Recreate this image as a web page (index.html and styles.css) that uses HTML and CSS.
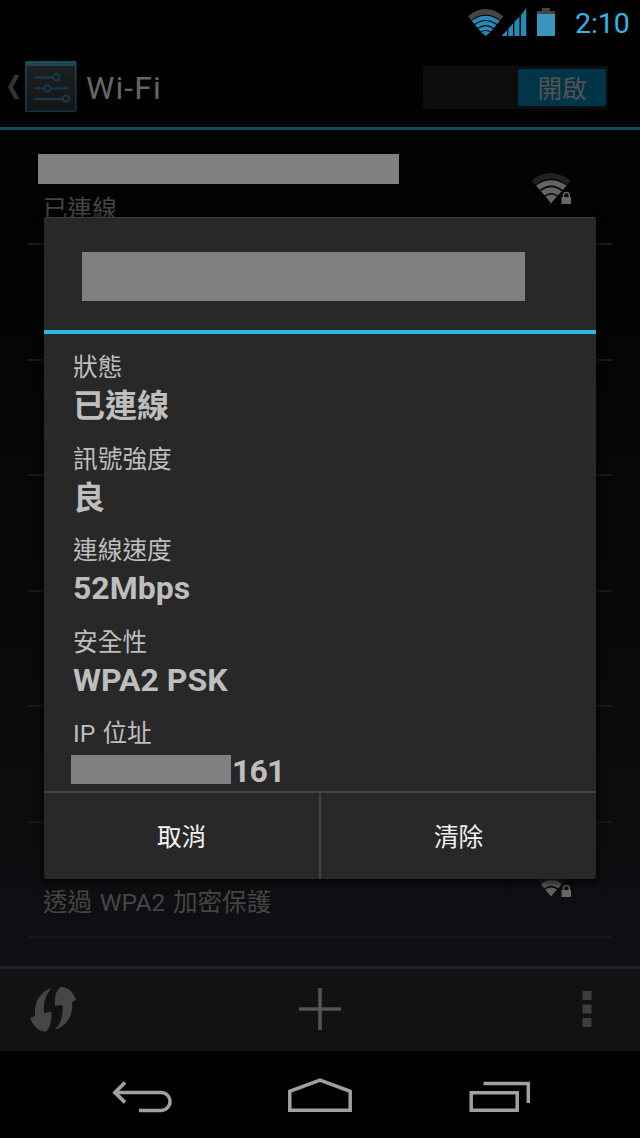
FILE: index.html
```html
<!DOCTYPE html>
<html lang="zh-Hant">
<head>
<meta charset="utf-8">
<title>Wi-Fi</title>
<link rel="stylesheet" href="styles.css">
</head>
<body>
<div class="screen">
  <div class="status">
    <svg class="status-icons" width="90" height="30" viewBox="467 8 90 30">
      <path fill="#444" d="M468 16.2Q485.700 2 503.300 16.200L500.300 20.200Q485.700 9.500 471.200 20.200Z"/>
      <g fill="#2789b6">
        <path d="M471.700 20.800Q485.700 10.500 499.800 20.800L497.100 24.100Q485.700 16 474.400 24.100Z"/>
        <path d="M475 24.900Q485.700 17.300 496.500 24.900L494 27.900Q485.700 22.300 477.500 27.900Z"/>
        <path d="M478.200 28.700Q485.700 23.600 493.300 28.700L490.800 31.600Q485.700 28.200 480.700 31.600Z"/>
        <path d="M481.300 32.300Q485.700 29.500 490.200 32.300L485.700 36Z"/>
        <path d="M501.500 36L507 30V36ZM508.300 36V28.500L513 23.500V36ZM514.300 36V22L519.500 16.500V36ZM521 36V15L526.300 8V36Z"/>
      </g>
      <path fill="#444" d="M537 11h5V8h8v3h5v4h-18z"/>
      <path fill="#3a95bb" d="M537 14h18v22h-18z"/>
    </svg>
    <span class="clock">2:10</span>
  </div>
  <div class="header">
    <svg class="up" width="72" height="54" viewBox="6 60 72 54">
      <defs><linearGradient id="g" x2="0" y2="1"><stop stop-color="#1f1f1f"/><stop offset="1" stop-color="#151515"/></linearGradient>
      <linearGradient id="e" x2="0" y2="1"><stop stop-color="#1b4a5a"/><stop offset="1" stop-color="#10334f"/></linearGradient></defs>
      <path fill="#333" d="M14.500 75H19.500L13 87.300L19.500 99.300H14.500L8 87.300Z"/>
      <rect x="25" y="61" width="51.500" height="51" rx="1.500" fill="url(#e)"/>
      <path fill="url(#g)" d="M26.700 66H75V110.700H26.700Z"/>
      <path stroke="#101a22" stroke-width="1.600" d="M60 77.300H69M51 87.800H69"/>
      <g stroke="#133a56" stroke-width="2" fill="none"><path d="M34 77.500H53M34 88.300H44M50.500 88.300H69M34 99H62.500"/><circle cx="56.300" cy="77.300" r="3.200"/><circle cx="47.500" cy="88.300" r="3.200"/><circle cx="66" cy="98.600" r="3.200"/></g>
    </svg>
    <h1 class="title">Wi-Fi</h1>
    <div class="switch"><span class="thumb">開啟</span></div>
  </div>
  <div class="list">
    <div class="row first">
      <div class="names"><div class="redacted"></div><div class="summary">已連線</div></div>
      <svg class="signal" width="42" height="34" viewBox="531 172 42 34">
        <path fill="#202020" d="M531.500 180.500Q551 165.500 570.500 180.500L567.300 185Q551 172.500 535.200 185Z"/>
        <g fill="#636363"><path d="M536 185.500Q551 175 566.500 185.500L562.800 190Q551 181 539.800 190Z"/><path d="M540.800 191Q551 183.300 561.800 191L558 195.500Q551 190.500 544.500 195.500Z"/><path d="M545.500 196.300Q551 192.500 557 196.300L551 203.500Z"/></g>
        <rect x="560.500" y="196" width="12" height="9" fill="#020303"/><path fill="#676767" d="M561.500 197H571V204H561.500Z"/><path d="M563.500 197.500V195.500a2.900 2.900 0 0 1 5.800 0V197.500" fill="none" stroke="#676767" stroke-width="1.500"/>
      </svg>
    </div>
    <div class="row"></div><div class="row"></div><div class="row"></div><div class="row"></div><div class="row"></div>
    <div class="row last">
      <div class="summary">透過 WPA2 加密保護</div>
      <svg class="signal" width="42" height="34" viewBox="531 172 42 34">
        <path fill="#202122" d="M531.500 180.500Q551 165.500 570.500 180.500L561.800 190.500H540.500Z"/>
        <g fill="#636363"><path d="M540.800 191Q551 182.300 561.800 191L558.300 195.300Q551 190 544.200 195.300Z"/><path d="M545.200 196.500Q551 192.500 557 196.500L551 203.500Z"/></g>
        <path fill="#676767" d="M561.500 197H571V204H561.500Z"/><path d="M563.500 197.500V195.500a2.900 2.900 0 0 1 5.800 0V197.500" fill="none" stroke="#676767" stroke-width="1.500"/>
      </svg>
    </div>
  </div>
  <div class="actions">
    <svg width="48" height="48" viewBox="29 985 48 48" fill="#464646"><path d="M51.700 988C39 992 34 1003 35 1016L30.200 1018C33 1026 39 1032 46.500 1031.500C51 1026 52 1019 51.300 1011.500L44 1013C43 1003 46 994 51.700 988Z"/><path d="M60.500 986.700C68 987 74 992 76.200 1000L72 1002C73.500 1015 67 1026 55 1029.700C61 1023 63.500 1015 62.300 1005L55.200 1006C54 999 55.500 991 60.500 986.700Z"/></svg>
    <svg class="plus" width="44" height="44" viewBox="0 0 44 44" stroke="#555" stroke-width="3.600"><path d="M1 22H43M22 1V43"/></svg>
    <svg width="10" height="38" viewBox="0 0 10 38" fill="#3e3e3f"><path d="M.500 1h9v9h-9zM.500 14.500h9v9h-9zM.500 28h9v9h-9z"/></svg>
  </div>
  <div class="nav">
    <svg width="420" height="40" viewBox="112 1076 420 40" fill="none" stroke="#a0a0a0" stroke-width="3.500">
      <path d="M125 1082.500L115 1092.500L125 1102.500" stroke-width="3.800"/><path d="M115 1092.500H161a9 9 0 0 1 0 18H139"/>
      <path d="M289.800 1110.200V1091.300L320 1080.200L350.200 1091.300V1110.200Z"/>
      <path d="M471.200 1092.800H517.200V1110.200H471.200ZM483.500 1083.600H528.300V1103"/>
    </svg>
  </div>
  <div class="dialog">
    <div class="dialog-head"><div class="dialog-name"></div></div>
    <div class="details">
      <div class="item"><div class="label">狀態</div><div class="value">已連線</div></div>
      <div class="item"><div class="label">訊號強度</div><div class="value">良</div></div>
      <div class="item"><div class="label">連線速度</div><div class="value latin">52Mbps</div></div>
      <div class="item"><div class="label">安全性</div><div class="value latin">WPA2 PSK</div></div>
      <div class="item"><div class="label">IP 位址</div><div class="value latin ip"><span class="mask"></span><span class="octet">161</span></div></div>
    </div>
    <div class="buttons"><div class="button">取消</div><div class="button">清除</div></div>
  </div>
</div>
</body>
</html>
```
FILE: styles.css
```css
* { box-sizing: border-box; }
body { margin: 0; background: #000; font-family: Roboto, "Noto Sans CJK TC", sans-serif; }
.screen { position: relative; width: 640px; height: 1138px; overflow: hidden; display: flex; flex-direction: column; background: linear-gradient(#000 0, #010202 180px, #0b0c0e 800px, #111317 1051px); }
.status { height: 45px; background: #000; display: flex; justify-content: flex-end; align-items: flex-start; padding: 8px 11px 0 0; }
.status-icons { margin-right: 18px; }
.clock { color: #33b5e5; font-size: 28.500px; line-height: 31px; width: 54px; white-space: nowrap; letter-spacing: -.1px; }
.header { height: 85px; border-bottom: 3px solid #104b60; display: flex; align-items: center; padding: 2px 32px 0 6px; }
.title { margin: 2px 0 0 8px; flex: 1; font-size: 32px; font-weight: 400; color: #656565; letter-spacing: 1.100px; }
.switch { width: 185px; height: 43px; background: #0d0d0d; display: flex; justify-content: flex-end; padding: 3px 2px; }
.thumb { width: 88px; height: 37px; border-radius: 2px; background: #003549; color: #55534f; font-size: 24.600px; line-height: 41px; text-align: center; }
.list { height: 836px; padding: 0 28px; }
.row { height: 115.500px; border-bottom: 2px solid #17181a; display: flex; justify-content: space-between; }
.first { height: 115px; padding: 24px 39px 0 10px; }
.redacted { width: 361px; height: 30px; background: #808080; }
.summary { font-size: 24.600px; line-height: 36px; color: #454545; word-spacing: 1.500px; }
.first .summary { margin: 8px 0 0 5px; }
.first .signal { margin-top: 18px; }
.last { padding: 42px 39px 0 15px; }
.last .summary { margin-top: 20px; }
.actions { height: 85px; border-top: 3px solid #202123; background: #101214; display: flex; justify-content: space-between; align-items: center; padding: 0 48px 2px 29px; }
.plus { margin-left: -19px; }
.nav { flex: 1; background: #000; padding: 25px 0 0 112px; }
.dialog { position: absolute; left: 44px; top: 217px; width: 552px; height: 662px; border-radius: 3px; background: #282828; box-shadow: 0 3px 7px 2px rgba(0,0,0,.65), inset 0 1px #3d3d3d; display: flex; flex-direction: column; }
.dialog-head { height: 117px; border-bottom: 4px solid #33b5e5; padding: 35px 37px 35px 38px; }
.dialog-name { width: 443px; height: 49px; background: #808080; }
.details { height: 457px; padding: 13px 29px 0; }
.item { height: 91.500px; color: #bebebe; }
.label { font-size: 24.700px; line-height: 41px; height: 38px; word-spacing: 1px; }
.value { font-size: 32px; line-height: 43px; height: 40px; font-weight: 700; }
.latin { line-height: 40px; }
.ip { display: flex; align-items: center; }
.octet { letter-spacing: -.9px; }
.mask { width: 160px; height: 29px; background: #808080; margin: -4px 1px 0 -2px; }
.buttons { height: 88px; display: flex; border-top: 2px solid #444; }
.button { flex: 1; height: 86px; padding-top: 3px; color: #f3f3f3; font-size: 24.600px; line-height: 83px; text-align: center; }
.button + .button { border-left: 2px solid #444; }
```
